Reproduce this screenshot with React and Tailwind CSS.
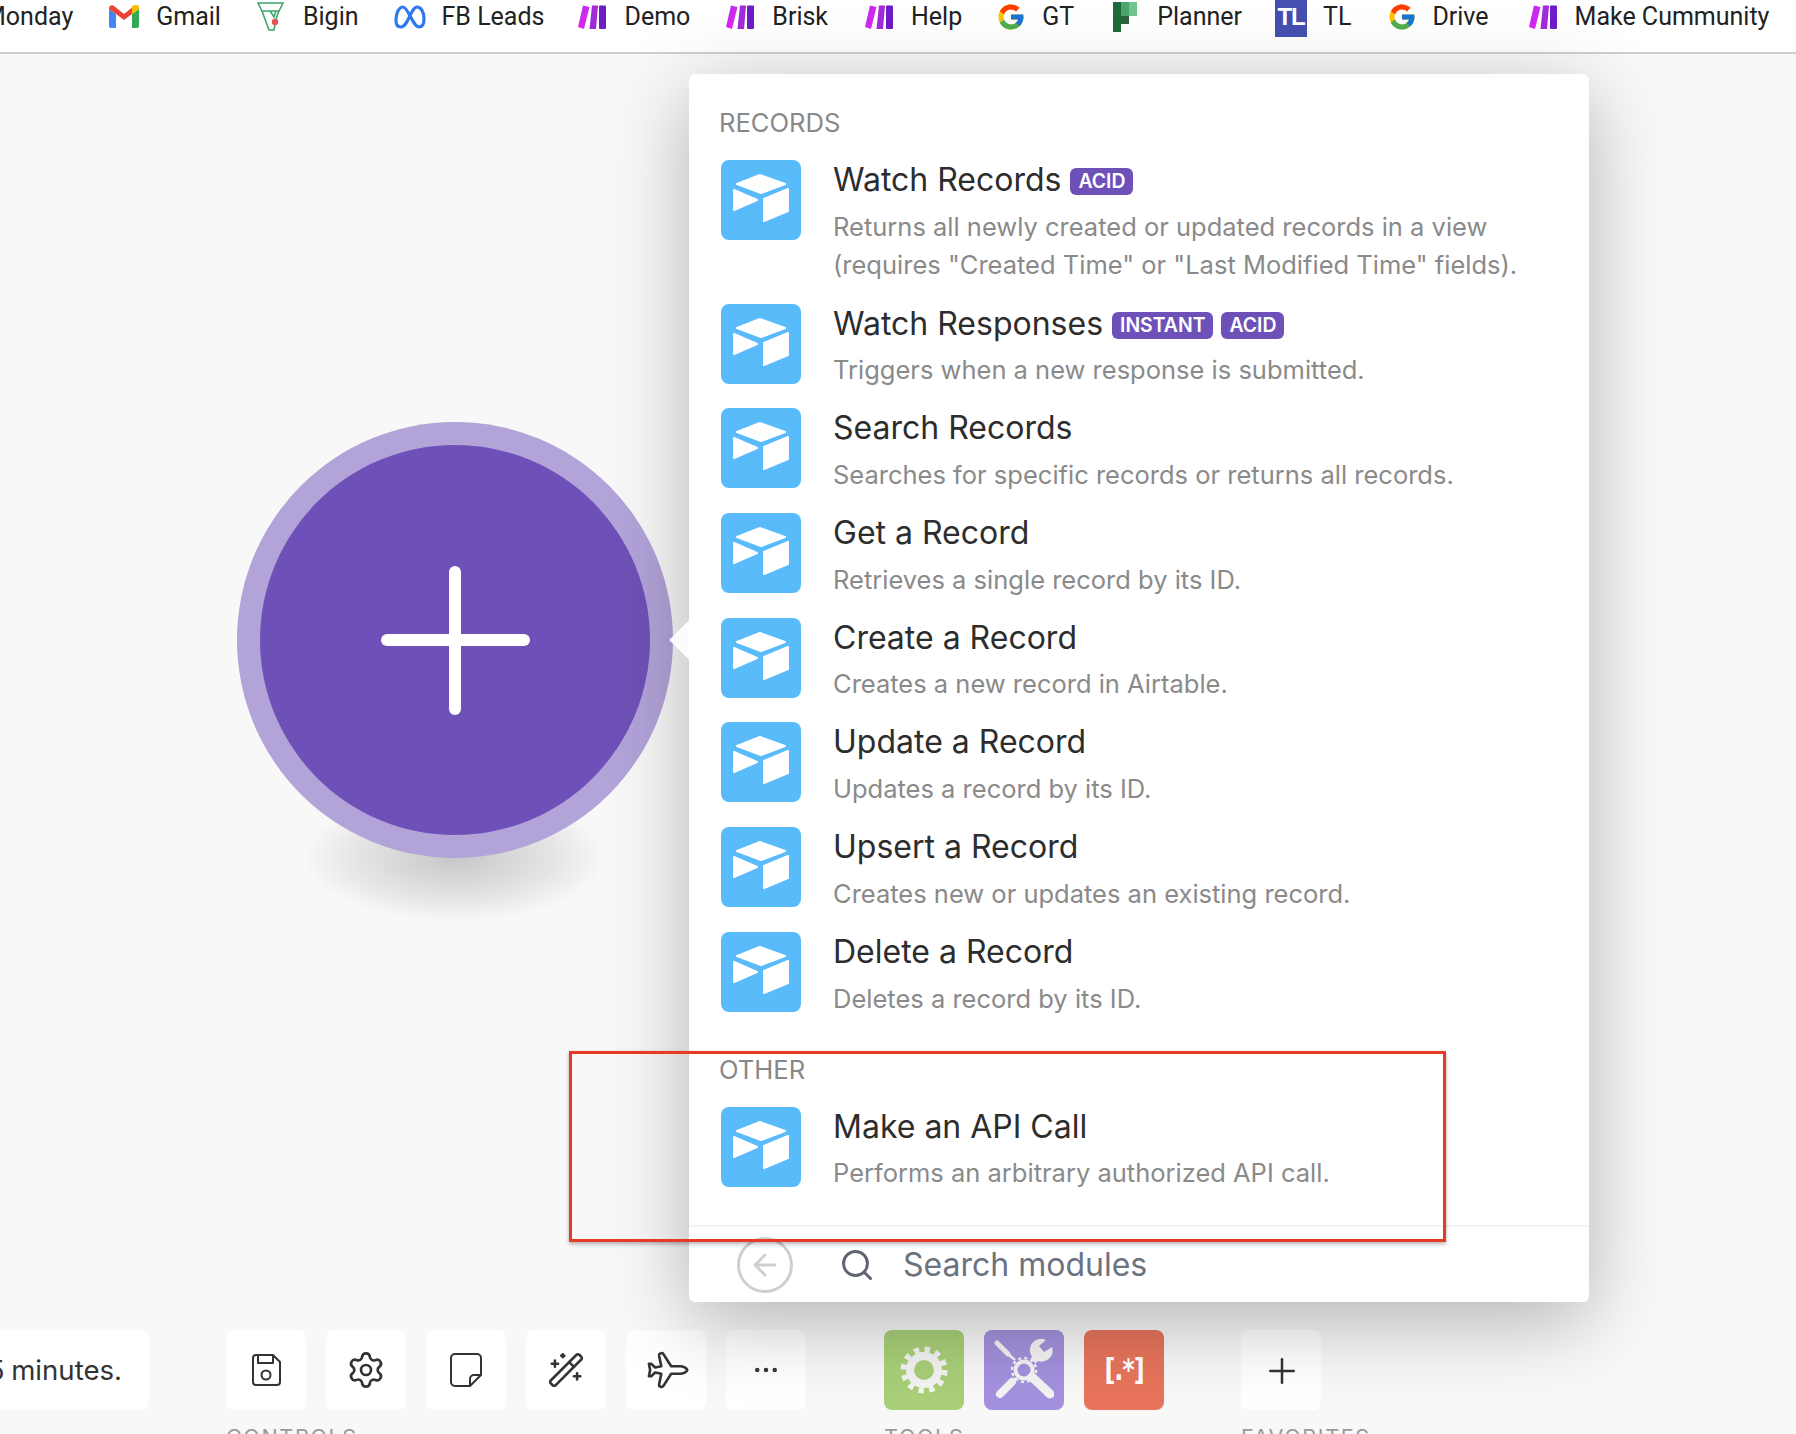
import { Settings, WandSparkles, Plane, Ellipsis, Plus, Search, ArrowLeft } from 'lucide-react'
import { FcGoogle } from 'react-icons/fc'

const MakeLogo = () => (
  <svg width="28" height="24" viewBox="0 0 28 24">
    <defs>
      <linearGradient id="mk1" x1="0" y1="0" x2="1" y2="1">
        <stop offset="0" stopColor="#b02de9" />
        <stop offset="1" stopColor="#f024f6" />
      </linearGradient>
    </defs>
    <path d="M5 0.5 L11.5 2 L6 24 L0 22 Z" fill="url(#mk1)" />
    <path d="M14 0.5 L20 0.5 L18 24 L11.5 24 Z" fill="#a12bd8" />
    <rect x="21" y="0.5" width="7" height="23.5" rx="1" fill="#6d1cc8" />
  </svg>
)

const GmailLogo = () => (
  <svg width="30" height="24" viewBox="0 0 30 24">
    <path d="M0 4 V21 a2 2 0 0 0 2 2 H7 V9 Z" fill="#4285f4" />
    <path d="M30 4 V21 a2 2 0 0 1 -2 2 H23 V9 Z" fill="#34a853" />
    <path d="M0 3 a3 3 0 0 1 5 -2 L15 9 L25 1 L23 9 L15 15 L7 9 L0 4 Z" fill="#ea4335" />
    <path d="M23 9 V1 L25 0.5 a3 3 0 0 1 5 3 V4 Z" fill="#fbbc04" />
  </svg>
)

const BiginLogo = () => (
  <svg width="28" height="30" viewBox="0 0 28 30" fill="none" stroke="#3fa66a" strokeWidth="1.6">
    <path d="M1 1 H26 L22 9 H5 Z" />
    <path d="M5 9 L12 28 H17 L19 17 L22 9" />
    <path d="M13 9 L17 15 L19 9" />
    <circle cx="18" cy="20" r="3.2" fill="#e5534b" stroke="none" />
  </svg>
)

const MetaLogo = () => (
  <svg width="32" height="24" viewBox="0 0 32 24" fill="none" stroke="#2f78f0" strokeWidth="3.2">
    <path d="M2 16 C2 6 6 2 9 2 C14 2 19 22 25 22 C29 22 30 18 30 14 C30 7 27 2 23 2 C17 2 14 22 7 22 C4 22 2 20 2 16 Z" />
  </svg>
)

const PlannerLogo = () => (
  <svg width="24" height="30" viewBox="0 0 24 30">
    <rect x="8" y="0" width="8" height="14" fill="#4aa56b" />
    <rect x="16" y="0" width="8" height="14" fill="#72c48f" />
    <rect x="0" y="0" width="8" height="30" fill="#1f6a3c" />
    <rect x="8" y="14" width="8" height="8" fill="#2f5f3c" />
  </svg>
)

const TlLogo = () => (
  <div className="w-[32px] h-[40px] bg-[#444fb0] flex items-center justify-center text-white font-bold text-[24px] font-['Liberation_Sans',sans-serif] tracking-tighter">
    TL
  </div>
)

const BOOKMARKS = [
  { label: 'Monday', ml: 'ml-0', gap: 'gap-[18px]' },
  { label: 'Gmail', icon: <GmailLogo />, ml: 'ml-[36px]', gap: 'gap-[17px]' },
  { label: 'Bigin', icon: <BiginLogo />, ml: 'ml-[36px]', gap: 'gap-[18px]' },
  { label: 'FB Leads', icon: <MetaLogo />, ml: 'ml-[35px]', gap: 'gap-[16px]' },
  { label: 'Demo', icon: <MakeLogo />, ml: 'ml-[34px]', gap: 'gap-[18px]' },
  { label: 'Brisk', icon: <MakeLogo />, ml: 'ml-[36px]', gap: 'gap-[18px]' },
  { label: 'Help', icon: <MakeLogo />, ml: 'ml-[37px]', gap: 'gap-[18px]' },
  { label: 'GT', icon: <FcGoogle size={30} />, ml: 'ml-[34px]', gap: 'gap-[16px]' },
  { label: 'Planner', icon: <PlannerLogo />, ml: 'ml-[39px]', gap: 'gap-[20px]' },
  { label: 'TL', icon: <TlLogo />, ml: 'ml-[33px]', gap: 'gap-[16px]' },
  { label: 'Drive', icon: <FcGoogle size={30} />, ml: 'ml-[36px]', gap: 'gap-[15px]' },
  { label: 'Make Cummunity', icon: <MakeLogo />, ml: 'ml-[40px]', gap: 'gap-[18px]' },
]

const RECORDS = [
  { title: 'Watch Records', badges: ['ACID'], desc: ['Returns all newly created or updated records in a view', '(requires "Created Time" or "Last Modified Time" fields).'] },
  { title: 'Watch Responses', badges: ['INSTANT', 'ACID'], desc: ['Triggers when a new response is submitted.'] },
  { title: 'Search Records', desc: ['Searches for specific records or returns all records.'] },
  { title: 'Get a Record', desc: ['Retrieves a single record by its ID.'] },
  { title: 'Create a Record', desc: ['Creates a new record in Airtable.'] },
  { title: 'Update a Record', desc: ['Updates a record by its ID.'] },
  { title: 'Upsert a Record', desc: ['Creates new or updates an existing record.'] },
  { title: 'Delete a Record', desc: ['Deletes a record by its ID.'] },
]

function AirtableTile() {
  return (
    <div className="w-[80px] h-[80px] shrink-0 rounded-[8px] bg-[#5abbfa] flex items-center justify-center">
      <svg width="80" height="80" viewBox="0 0 80 80" fill="#fff" stroke="#fff" strokeWidth="2" strokeLinejoin="round">
        <path d="M39 15 L64 24 L40 33 L16 24 Z" />
        <path d="M13 30 L36 40 L13 50 Z" />
        <path d="M43 39 L67 29 L67 51 L43 61 Z" />
      </svg>
    </div>
  )
}

function ModuleRow({ title, badges = [], desc }) {
  return (
    <div className="flex gap-[32px] first:mb-[1px]">
      <AirtableTile />
      <div className="min-w-0">
        <div className="flex items-center h-[40px]">
          <span className="text-[32px] leading-[40px] text-[#2d2d2d]">{title}</span>
          <span className="flex gap-[8px] ml-[9px] mt-[3px]">
            {badges.map(b => (
              <span key={b} className="h-[27px] px-[8px] rounded-[6px] bg-[#6e51b8] text-white text-[19.4px] font-semibold leading-[27px]">{b}</span>
            ))}
          </span>
        </div>
        <div className="mt-[7.7px] text-[25.5px] leading-[38px] text-[#8a8a8a] whitespace-nowrap">
          {desc.map(d => <div key={d}>{d}</div>)}
        </div>
      </div>
    </div>
  )
}

function ToolButton({ children, className = 'bg-white' }) {
  return (
    <div className={`w-[80px] h-[80px] rounded-[8px] flex items-center justify-center ${className}`}>
      {children}
    </div>
  )
}

const SaveIcon = () => (
  <svg width="34" height="34" viewBox="0 0 34 34" fill="none" stroke="#333" strokeWidth="2" strokeLinejoin="round">
    <path d="M4 5 a3 3 0 0 1 3 -3 H24 L31 9 V29 a3 3 0 0 1 -3 3 H7 a3 3 0 0 1 -3 -3 Z" />
    <path d="M9 2 V10 H24 V2" />
    <circle cx="17" cy="22" r="4.5" />
  </svg>
)

const NoteIcon = () => (
  <svg width="34" height="36" viewBox="0 0 34 36" fill="none" stroke="#333" strokeWidth="2" strokeLinejoin="round">
    <path d="M21 34 H6 a4 4 0 0 1 -4 -4 V6 a4 4 0 0 1 4 -4 H28 a4 4 0 0 1 4 4 V23 Z" />
    <path d="M21 34 V27 a4 4 0 0 1 4 -4 H32" />
  </svg>
)

const GearFill = () => (
  <svg width="48" height="48" viewBox="0 0 48 48" fill="none" stroke="#f3f3f3">
    <circle cx="24" cy="24" r="14" strokeWidth="8" />
    <circle cx="24" cy="24" r="20.5" strokeWidth="6" strokeDasharray="5.3 5.43" />
  </svg>
)

const ToolsIcon = () => (
  <svg width="60" height="62" viewBox="0 0 60 62" fill="none" stroke="#f3f3f3">
    <circle cx="30" cy="31" r="8.5" strokeWidth="4" />
    <circle cx="30" cy="31" r="12" strokeWidth="2.5" strokeDasharray="3 3.28" />
    <path d="M3 4 L14 15" strokeWidth="5" strokeLinecap="round" />
    <path d="M14 15 L21 21" strokeWidth="2.5" />
    <path d="M39 22 L46 15" strokeWidth="7" />
    <path d="M58 8 A11 11 0 0 1 42 21 A11 11 0 0 1 52 1 L45 7 L50 13 Z" fill="#f3f3f3" stroke="none" />
    <path d="M38 38 L56 55" strokeWidth="9" strokeLinecap="round" />
    <path d="M22 39 L18 43" strokeWidth="3" />
    <path d="M18 43 L6 55" strokeWidth="8" strokeLinecap="round" />
  </svg>
)

export default function App() {
  return (
    <div className="relative w-[1796px] h-[1434px] overflow-hidden bg-[#f8f8f8] font-['Inter',sans-serif]">
      {/* bookmarks bar */}
      <div className="h-[54px] bg-white border-b-2 border-[#cfcfcf] flex items-start overflow-hidden whitespace-nowrap font-['Roboto',sans-serif] text-[25px] text-[#222]">
        <div className="flex items-center h-[34px] -ml-[16px]">
          {BOOKMARKS.map(b => (
            <div key={b.label} className={`flex items-center shrink-0 ${b.gap} ${b.ml}`}>
              {b.icon}
              <span>{b.label}</span>
            </div>
          ))}
        </div>
      </div>

      {/* scenario node */}
      <div className="absolute left-[237px] top-[422px] w-[436px] h-[436px]">
        <div className="absolute left-[66px] top-[370px] w-[304px] h-[130px] rounded-full bg-[radial-gradient(closest-side,rgba(0,0,0,0.2),rgba(0,0,0,0.08)_65%,transparent)]" />
        <div className="relative w-[436px] h-[436px] rounded-full bg-[#b2a3d9] flex items-center justify-center">
          <div className="w-[390px] h-[390px] rounded-full bg-[#6e51b8] flex items-center justify-center">
            <div className="relative w-[149px] h-[149px]">
              <div className="absolute left-0 top-[68px] w-[149px] h-[12px] rounded-full bg-white" />
              <div className="absolute left-[68px] top-0 w-[12px] h-[149px] rounded-full bg-white" />
            </div>
          </div>
        </div>
      </div>

      {/* bottom toolbar */}
      <div className="absolute left-0 top-[1330px] flex items-start">
        <div className="w-[149px] h-[80px] rounded-r-[8px] bg-white flex items-center justify-end pr-[27px] pt-[1px] text-[27.6px] text-[#333] whitespace-nowrap [word-spacing:-1px]">
          5 minutes.
        </div>
        <div className="ml-[77px]">
          <div className="flex gap-[20px]">
            <ToolButton><SaveIcon /></ToolButton>
            <ToolButton><Settings size={40} strokeWidth={1.6} color="#333" /></ToolButton>
            <ToolButton><NoteIcon /></ToolButton>
            <ToolButton><WandSparkles size={38} strokeWidth={1.6} color="#333" /></ToolButton>
            <ToolButton><Plane size={42} strokeWidth={1.5} color="#333" className="rotate-45 -ml-[3px]" /></ToolButton>
            <ToolButton><Ellipsis size={30} strokeWidth={1.6} color="#333" /></ToolButton>
          </div>
          <div className="mt-[15px] text-[21.6px] leading-[24px] tracking-[1.6px] text-[#9a9a9a]">CONTROLS</div>
        </div>
        <div className="ml-[78px]">
          <div className="flex gap-[20px]">
            <ToolButton className="bg-[#a9cf78]"><GearFill /></ToolButton>
            <ToolButton className="bg-[#a391dd]"><ToolsIcon /></ToolButton>
            <ToolButton className="bg-[#e7745b]">
              <span className="text-white text-[24px] font-bold font-['DejaVu_Sans',sans-serif] tracking-tighter scale-y-125">[.*]</span>
            </ToolButton>
          </div>
          <div className="mt-[15px] text-[21.6px] leading-[24px] tracking-[1.6px] text-[#9a9a9a]">TOOLS</div>
        </div>
        <div className="ml-[77px]">
          <ToolButton><Plus size={40} strokeWidth={1.5} color="#333" className="mt-[1px] ml-[1px]" /></ToolButton>
          <div className="mt-[15px] text-[21.6px] leading-[24px] tracking-[1.6px] text-[#9a9a9a]">FAVORITES</div>
        </div>
      </div>

      {/* module picker */}
      <div className="absolute left-[689px] top-[74px] w-[900px] h-[1228px] bg-white rounded-[6px] shadow-[0_20px_80px_rgba(0,0,0,0.28)] flex flex-col">
        <div className="absolute left-[-21px] top-[546px] w-[21px] h-[40px] overflow-hidden">
          <div className="absolute left-[7px] top-[6px] w-[28px] h-[28px] rotate-45 bg-[#fbfbfb]" />
        </div>
        <div className="flex-1">
          <div className="pt-[34px] pl-[30px] text-[25.6px] leading-[30px] text-[#888]">RECORDS</div>
          <div className="mt-[22px] pl-[32px] flex flex-col gap-[19px]">
            {RECORDS.map(r => <ModuleRow key={r.title} {...r} />)}
          </div>
          <div className="mt-[37px] pl-[30px] text-[25.6px] leading-[30px] text-[#888]">OTHER</div>
          <div className="mt-[22px] pl-[32px]">
            <ModuleRow title="Make an API Call" desc={['Performs an arbitrary authorized API call.']} />
          </div>
        </div>
        <div className="h-[77px] border-t-2 border-[#f3f3f3] flex items-center pl-[48px]">
          <div className="w-[56px] h-[56px] rounded-full border-[3px] border-[#cfcfcf] flex items-center justify-center">
            <ArrowLeft size={34} strokeWidth={2} color="#cfcfcf" />
          </div>
          <Search size={36} strokeWidth={2} color="#5f6670" className="ml-[46px]" />
          <span className="ml-[28px] text-[32px] text-[#6b7280]">Search modules</span>
        </div>
      </div>

      {/* red annotation box */}
      <div className="absolute left-[569px] top-[1051px] w-[877px] h-[191px] border-[3px] border-[#e53a25] shadow-[0_2px_4px_rgba(0,0,0,0.3)]" />
    </div>
  )
}
